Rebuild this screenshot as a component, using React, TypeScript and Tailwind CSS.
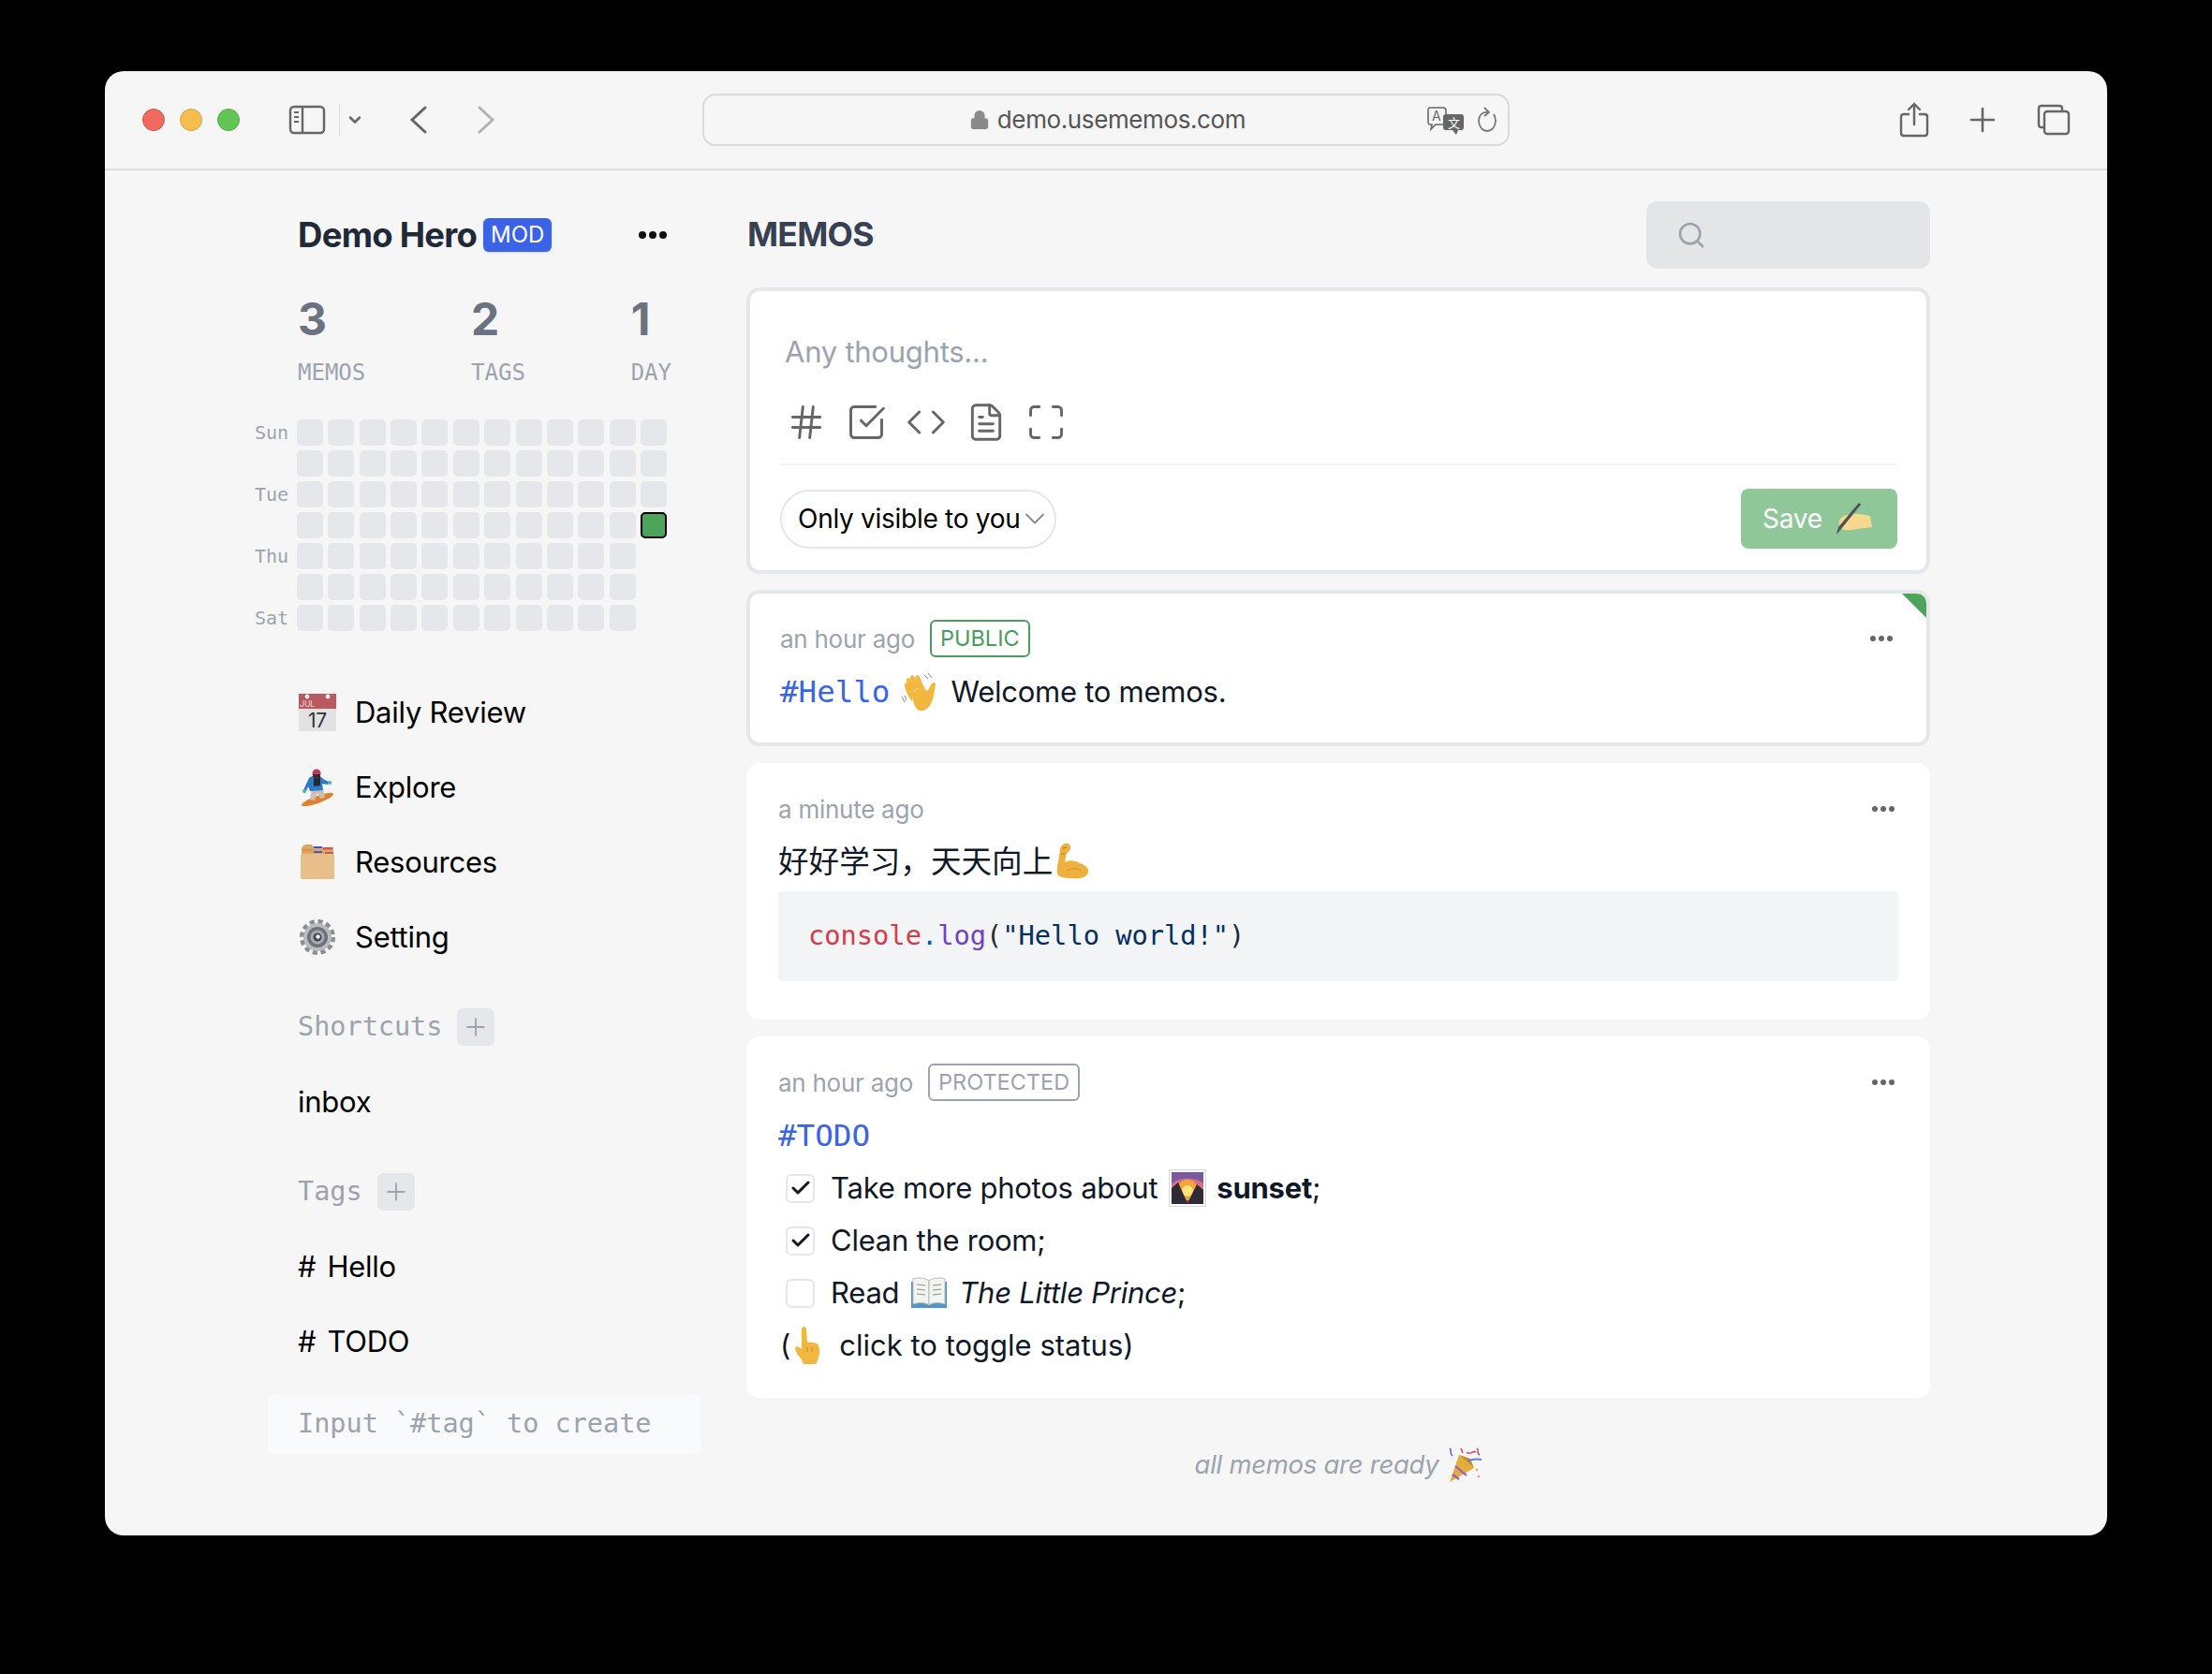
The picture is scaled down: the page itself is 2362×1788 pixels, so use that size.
import React from 'react';
import { Check, ChevronDown, Code, FileText, Hash, Lock, Maximize, Plus, Search, SquareCheckBig } from 'lucide-react';

const SANS = "[font-family:Inter,'Noto_Sans_CJK_SC',sans-serif]";

const CalendarEmoji = () => (
  <svg width="40" height="40" viewBox="0 0 40 40" className="shrink-0">
    <rect x="0" y="16" width="40" height="24" fill="#e2e2e2" />
    <rect x="0" y="0" width="40" height="16" fill="#b9585f" />
    <circle cx="9" cy="3" r="2.4" fill="#f4eeee" />
    <circle cx="31" cy="3" r="2.4" fill="#f4eeee" />
    <text x="1" y="14" fontSize="9" fill="#ecd3d3" fontFamily="Inter">JUL</text>
    <text x="20" y="36" fontSize="21" fill="#333" textAnchor="middle" fontFamily="Inter">17</text>
  </svg>
);

const SnowboarderEmoji = () => (
  <svg width="40" height="40" viewBox="0 0 40 40" className="shrink-0">
    <ellipse cx="20" cy="33" rx="18" ry="4" transform="rotate(-20 20 33)" fill="#e2802f" />
    <path d="M14 22 L26 21 L28 31 L23 32 L20 26 L17 34 L12 33 Z" fill="#c9bfb6" />
    <path d="M11 10 C14 7 24 7 26 11 L32 14 L31 17 L25 16 L26 23 L12 24 L10 19 L8 24 L5 23 Z" fill="#2f79c9" />
    <path d="M16 9 L23 9 L23 18 L16 19 Z" fill="#232a33" />
    <circle cx="19" cy="5" r="4.5" fill="#b8395f" />
    <rect x="15" y="6" width="8" height="3" fill="#3c2a2a" />
    <circle cx="6" cy="24" r="2" fill="#39b7a5" />
    <circle cx="33" cy="15" r="2" fill="#39b7a5" />
  </svg>
);

const FolderEmoji = () => (
  <svg width="40" height="40" viewBox="0 0 40 40" className="shrink-0">
    <path d="M3 7 C3 3 5 1 9 1 L13 1 C15 1 15 4 17 4 L37 4 L37 14 L3 14 Z" fill="#d8a76a" />
    <rect x="16" y="3" width="9" height="2" fill="#4a55c9" />
    <rect x="26" y="4" width="10" height="2.4" fill="#d9534a" />
    <rect x="16" y="8" width="9" height="2" fill="#4a55c9" />
    <rect x="28" y="9" width="9" height="2.4" fill="#d9534a" />
    <rect x="3" y="6" width="12" height="2" fill="#e8913b" />
    <rect x="2" y="11" width="36" height="27" rx="1.5" fill="#e6bf8b" />
  </svg>
);

const GearEmoji = () => (
  <svg width="40" height="40" viewBox="0 0 40 40" className="shrink-0">
    <circle cx="20" cy="20" r="16.5" fill="none" stroke="#8b8d92" strokeWidth="5" strokeDasharray="5 3.64" />
    <circle cx="20" cy="20" r="15" fill="#b9bbc0" />
    <circle cx="20" cy="20" r="11" fill="#6f7279" />
    <circle cx="20" cy="20" r="7.5" fill="#a9abb1" />
    <circle cx="20" cy="20" r="4.5" fill="#43464c" />
    <circle cx="20.5" cy="19.5" r="2.2" fill="#f1f1f1" />
  </svg>
);

const WaveEmoji = () => (
  <svg width="40" height="40" viewBox="0 0 40 40" className="shrink-0">
    <g fill="#f2b73f">
      <path d="M12 30 C8 26 5 18 4 14 C3 10 7 9 8.5 12 L13 21 Z" />
      <path d="M12 21 L6 9 C5 5 9 4 10.5 7 L16 17 Z" />
      <path d="M15 18 L10 6 C9 2 13 1 14.5 4 L20 15 Z" />
      <path d="M19 16 L15.5 5 C15 2 19 1 20 4 L25 16 Z" />
      <path d="M11 21 L24 13 C26 18 27 20 29 18 C31 15 33 9 36 10 C38 11 36 17 35 24 C33 33 29 40 22 40 C16 40 14 35 11 21 Z" />
    </g>
    <path d="M25 2 L29 6 M29 0 L33 5" stroke="#777" strokeWidth="0.9" fill="none" />
    <path d="M1 25 L4 31 M4 24 L6 29" stroke="#777" strokeWidth="0.9" fill="none" />
  </svg>
);

const MuscleEmoji = () => (
  <svg width="40" height="40" viewBox="0 0 40 40" className="shrink-0">
    <path d="M8 8 C8 2 15 -1 18 2 C21 5 18 10 15 11 L13 21 C18 18 25 19 29 22 C35 24 39 27 38 32 C36 38 28 39 20 38 C13 38 6 37 5 33 C4 27 7 15 8 8 Z" fill="#eeb03e" />
    <path d="M11 6 L15 5 M9 12 L14 12" stroke="#b97c1e" strokeWidth="1.1" />
    <path d="M15 30 C20 27 25 27 30 30" stroke="#cf9226" strokeWidth="1" fill="none" />
  </svg>
);

const HandWriteEmoji = () => (
  <svg width="38" height="36" viewBox="0 0 38 36" className="shrink-0">
    <path d="M3 20 C6 14 12 14 16 13 C22 12 30 14 36 15 L38 27 L21 29 C13 31 6 31 3 27 Z" fill="#f5d98f" />
    <path d="M24 1 L26 3 L5 29 L0 35 L2 27 Z" fill="#4f5357" />
  </svg>
);

const SunsetEmoji = () => (
  <svg width="40" height="40" viewBox="0 0 40 40" className="shrink-0">
    <rect x="0.5" y="0.5" width="39" height="39" fill="#fff" stroke="#d6d6d6" />
    <rect x="3" y="3" width="34" height="34" fill="#7a5a9c" />
    <path d="M3 24 L37 24 L37 15 C27 8 13 8 3 15 Z" fill="#d1728a" />
    <circle cx="20" cy="22" r="11" fill="#f5a33b" />
    <circle cx="20" cy="23" r="6" fill="#ffe27a" />
    <path d="M3 37 L3 20 L10 14 L20 36 L30 16 L37 22 L37 37 Z" fill="#2f2a35" />
  </svg>
);

const BookEmoji = () => (
  <svg width="40" height="36" viewBox="0 0 40 36" className="shrink-0">
    <path d="M1 6 L1 34 L39 34 L39 6 Z" fill="#4f94c4" />
    <path d="M3 3 C9 1 16 2 20 5 L20 31 C16 28 9 28 3 30 Z" fill="#f3f3f0" stroke="#b9b9b9" />
    <path d="M37 3 C31 1 24 2 20 5 L20 31 C24 28 31 28 37 30 Z" fill="#f3f3f0" stroke="#b9b9b9" />
    <path d="M7 9 L16 10 M7 14 L16 15 M7 19 L16 20 M24 10 L33 9 M24 15 L33 14 M24 20 L33 19" stroke="#8f8f8f" strokeWidth="1.2" />
  </svg>
);

const PointEmoji = () => (
  <svg width="30" height="40" viewBox="0 0 30 40" className="shrink-0">
    <path d="M9 3 C9 -1 14 -1 14 3 L15 17 C20 16 26 17 27 20 C29 26 28 32 26 36 L24 40 L11 40 L9 35 C5 31 2 26 2 23 C3 20 6 21 9 24 Z" fill="#f2b73f" />
    <path d="M15 22 L15 27 M20 22 L20 27" stroke="#c98f22" strokeWidth="1" />
  </svg>
);

const PopperEmoji = () => (
  <svg width="36" height="38" viewBox="0 0 36 38" className="shrink-0">
    <path d="M2 37 L12 8 L28 22 Z" fill="#e3ad3a" />
    <path d="M8 20 L20 30 M5 29 L12 34" stroke="#9a5ac9" strokeWidth="2.2" />
    <path d="M12 8 L28 22 L24 12 Z" fill="#c68a22" />
    <path d="M14 1 L16 6 M20 5 C24 9 26 3 30 5 M31 1 C34 3 30 6 34 8" stroke="#d3506b" strokeWidth="1.6" fill="none" />
    <path d="M22 14 C27 12 31 12 36 13" stroke="#5b83e6" strokeWidth="2" fill="none" />
    <path d="M2 1 C5 3 1 6 5 9" stroke="#4a6fd6" strokeWidth="1.6" fill="none" />
    <circle cx="31" cy="24" r="1.3" fill="#e3ad3a" />
    <circle cx="33" cy="31" r="1.3" fill="#e39a7a" />
  </svg>
);

const Dots = ({ className, size }: { className: string; size: string }) => (
  <div className={`flex items-center justify-between ${className}`}>
    {[0, 1, 2].map((i) => (
      <span key={i} className={`${size} rounded-full bg-current`} />
    ))}
  </div>
);

const Toolbar = () => (
  <div className="flex h-[106px] shrink-0 items-center border-b-2 border-[#dcdcdc] pl-[40px] text-[#666]">
    <div className="flex gap-[16px]">
      <span className="h-[24px] w-[24px] rounded-full border border-[#d9544c] bg-[#ee6a5f]" />
      <span className="h-[24px] w-[24px] rounded-full border border-[#dba33c] bg-[#f5bd4f]" />
      <span className="h-[24px] w-[24px] rounded-full border border-[#4fae47] bg-[#61c454]" />
    </div>
    <svg width="40" height="32" viewBox="0 0 40 32" fill="none" stroke="#666" strokeWidth="2.4" className="ml-[52px]">
      <rect x="2" y="2" width="36" height="28" rx="4" />
      <path d="M15 2 V30" />
      <path d="M6 8 H11 M6 13 H11 M6 18 H11" strokeWidth="2" />
    </svg>
    <span className="ml-[14px] h-[36px] w-[1px] bg-[#dedede]" />
    <ChevronDown size={20} strokeWidth={3} className="ml-[6px]" />
    <svg width="20" height="30" viewBox="0 0 20 30" fill="none" stroke="#666" strokeWidth="3" strokeLinecap="round" className="ml-[48px]">
      <path d="M17 2 L3 15 L17 28" />
    </svg>
    <svg width="20" height="30" viewBox="0 0 20 30" fill="none" stroke="#b3b3b3" strokeWidth="3" strokeLinecap="round" className="ml-[52px]">
      <path d="M3 2 L17 15 L3 28" />
    </svg>
    <div className="relative ml-[221px] flex h-[56px] w-[862px] items-center justify-center rounded-[14px] border-2 border-[#dadada]">
      <div className="ml-[3px] flex items-center gap-[8px] text-[26px] leading-[36px] tracking-[-0.015em] text-[#555]">
        <Lock size={22} fill="#8a8a8a" stroke="#8a8a8a" />
        <span>demo.usememos.com</span>
      </div>
      <svg width="40" height="30" viewBox="0 0 40 30" className="absolute right-[46px] top-[12px]">
        <path d="M3 1 H17 C19 1 20 2 20 4 V16 C20 18 19 19 17 19 H9 L4 24 L5 19 H3 C1 19 1 18 1 16 V4 C1 2 1 1 3 1 Z" fill="#f5f5f5" stroke="#666" strokeWidth="1.6" />
        <text x="5" y="15" fontSize="14" fill="#666" fontFamily="Inter">A</text>
        <path d="M20 8 H36 C38 8 39 9 39 11 V22 C39 24 38 25 36 25 H33 L31 30 L27 25 H20 C18 25 17 24 17 22 V11 C17 9 18 8 20 8 Z" fill="#666" />
        <text x="22" y="22" fontSize="13" fill="#fff" fontFamily="'Noto Sans CJK SC'">文</text>
      </svg>
      <svg width="22" height="28" viewBox="0 0 22 28" fill="none" stroke="#777" strokeWidth="1.8" className="absolute right-[11px] top-[12px]">
        <path d="M12 6 C5 5 2 10 2 15 C2 21 6 26 11 26 C16 26 20 21 20 15 C20 12 19 10 18 8" />
        <path d="M8 1 L13 6 L8 10" />
      </svg>
    </div>
    <svg width="32" height="38" viewBox="0 0 32 38" fill="none" stroke="#666" strokeWidth="2.4" strokeLinecap="round" className="ml-[416px]">
      <path d="M10 13 H5 C3 13 2 14 2 16 V33 C2 35 3 36 5 36 H27 C29 36 30 35 30 33 V16 C30 14 29 13 27 13 H22" />
      <path d="M16 24 V2 M10 8 L16 2 L22 8" />
    </svg>
    <svg width="28" height="28" viewBox="0 0 28 28" stroke="#666" strokeWidth="2.6" strokeLinecap="round" className="ml-[43px]">
      <path d="M14 2 V26 M2 14 H26" />
    </svg>
    <svg width="36" height="34" viewBox="0 0 36 34" fill="none" stroke="#666" strokeWidth="2.4" className="ml-[44px]">
      <path d="M7 25 H5 C3 25 2 24 2 22 V5 C2 3 3 2 5 2 H24 C26 2 27 3 27 5 V8" />
      <rect x="8" y="8" width="26" height="24" rx="3" />
    </svg>
  </div>
);

const NAV = [
  { label: 'Daily Review', icon: <CalendarEmoji /> },
  { label: 'Explore', icon: <SnowboarderEmoji /> },
  { label: 'Resources', icon: <FolderEmoji /> },
  { label: 'Setting', icon: <GearEmoji /> },
];

const STATS = [
  { value: '3', label: 'MEMOS' },
  { value: '2', label: 'TAGS' },
  { value: '1', label: 'DAY' },
];

const Heatmap = () => (
  <div className="mt-[34px] flex gap-[9px]">
    <div className="flex w-[36px] flex-col gap-[5px] text-[20px] leading-[28px] text-[#9ca3af]">
      {['Sun', '', 'Tue', '', 'Thu', '', 'Sat'].map((d, i) => (
        <span key={i} className="h-[28px]">{d}</span>
      ))}
    </div>
    <div className="grid grid-flow-col grid-cols-[repeat(12,28px)] grid-rows-[repeat(7,28px)] gap-x-[5.36px] gap-y-[5px]">
      {Array.from({ length: 77 }).map((_, i) => (
        <span key={i} className="rounded-[5px] bg-[#e6e7ea]" />
      ))}
      <span className="col-start-12 row-start-1 rounded-[5px] bg-[#e6e7ea]" />
      <span className="col-start-12 row-start-2 rounded-[5px] bg-[#e6e7ea]" />
      <span className="col-start-12 row-start-3 rounded-[5px] bg-[#e6e7ea]" />
      <span className="col-start-12 row-start-4 rounded-[5px] border-2 border-black bg-[#4ca55a]" />
    </div>
  </div>
);

const SectionTitle = ({ label, className }: { label: string; className: string }) => (
  <div className={`flex h-[40px] items-center gap-[16px] ${className}`}>
    <span className="text-[28.5px] leading-[40px] text-[#9ca3af]">{label}</span>
    <span className="flex h-[40px] w-[40px] items-center justify-center rounded-[6px] bg-[#e5e7eb] text-[#9ca3af]">
      <Plus size={30} strokeWidth={1.5} />
    </span>
  </div>
);

const NavRow = ({ children }: { children: React.ReactNode }) => (
  <div className={`flex h-[80px] items-center text-[31px] leading-[40px] tracking-[-0.008em] text-black ${SANS}`}>{children}</div>
);

const Sidebar = () => (
  <aside className="flex w-[685px] shrink-0 flex-col pl-[160px] pt-[49px] [font-family:'DejaVu_Sans_Mono',monospace]">
    <div className={`ml-[46px] flex h-[40px] w-[394px] items-center ${SANS}`}>
      <span className="text-[36.5px] font-bold leading-[40px] tracking-[-0.02em] text-[#1f2937]">Demo Hero</span>
      <span className="ml-[7px] flex h-[36px] w-[73px] items-center justify-center rounded-[6px] bg-[#3b63e8] text-[24px] text-white shadow-sm">MOD</span>
      <Dots className="ml-auto w-[30px] text-[#111]" size="h-[8px] w-[8px]" />
    </div>
    <div className="ml-[46px] mt-[42px] flex w-[399px] justify-between">
      {STATS.map((s) => (
        <div key={s.label} className="flex flex-col">
          <span className={`text-[48px] font-bold leading-[56px] text-[#6b7280] ${SANS}`}>{s.value}</span>
          <span className="mt-[13px] text-[24px] leading-[32px] text-[#9ca3af]">{s.label}</span>
        </div>
      ))}
    </div>
    <Heatmap />
    <div className="ml-[46px] mt-[47px] flex flex-col">
      {NAV.map((n) => (
        <NavRow key={n.label}>
          <span className="ml-[1px] mr-[20px] flex">{n.icon}</span>
          {n.label}
        </NavRow>
      ))}
      <SectionTitle label="Shortcuts" className="mt-[36px]" />
      <div className="mt-[20px]">
        <NavRow>inbox</NavRow>
      </div>
      <SectionTitle label="Tags" className="mt-[36px]" />
      <div className="mt-[20px]">
        <NavRow><span className="mr-[12px]">#</span> Hello</NavRow>
        <NavRow><span className="mr-[12px]">#</span> TODO</NavRow>
      </div>
    </div>
    <div className="ml-[14px] mt-[17px] flex h-[63px] w-[462px] items-center rounded-[6px] bg-[#f9fafb] pl-[32px] text-[28.5px] text-[#9ca3af]">
      {'Input `#tag` to create'}
    </div>
  </aside>
);

const Editor = () => (
  <div className="mt-[20px] flex flex-col rounded-[14px] border-4 border-[#e5e7eb] bg-white px-[31px] pb-[23px] pt-[45px]">
    <div className="ml-[6px] text-[31px] leading-[40px] tracking-[-0.008em] text-[#9ca3af]">Any thoughts...</div>
    <div className="ml-[7px] mt-[33px] flex gap-[20px] text-[#666]">
      <Hash size={44} strokeWidth={1.6} />
      <SquareCheckBig size={44} strokeWidth={1.6} />
      <Code size={44} strokeWidth={1.6} />
      <FileText size={44} strokeWidth={1.6} />
      <Maximize size={44} strokeWidth={1.6} />
    </div>
    <div className="mt-[22px] h-[2px] bg-[#f3f4f6]" />
    <div className="mt-[25px] flex items-center justify-between">
      <div className="ml-[1px] flex h-[63px] w-[295px] items-center rounded-full border-2 border-[#e5e7eb] pl-[17px] text-[28px] tracking-[-0.01em] text-black">
        <span className="whitespace-nowrap">Only visible to you</span>
        <ChevronDown size={36} strokeWidth={1.2} className="ml-[-2px] shrink-0 text-[#888]" />
      </div>
      <div className="flex h-[64px] w-[167px] items-center gap-[15px] rounded-[8px] bg-[#8fc798] pl-[23px] text-[28px] tracking-[-0.01em] text-white">
        Save
        <HandWriteEmoji />
      </div>
    </div>
  </div>
);

const MemoMeta = ({ time, badge, badgeClass, dotsClass }: { time: string; badge?: string; badgeClass?: string; dotsClass?: string }) => (
  <div className="flex h-[40px] items-center">
    <span className="text-[26px] tracking-[-0.01em] text-[#9ca3af]">{time}</span>
    {badge && (
      <span className={`ml-[16px] flex h-[40px] items-center rounded-[6px] border-2 px-[9px] text-[23.5px] ${badgeClass}`}>{badge}</span>
    )}
    <Dots className={`ml-auto w-[24px] text-[#666] ${dotsClass ?? ''}`} size="h-[6px] w-[6px]" />
  </div>
);

const TodoRow = ({ checked, children }: { checked: boolean; children: React.ReactNode }) => (
  <div className="flex h-[56px] items-center">
    <span className="ml-[8px] mr-[17px] flex h-[31px] w-[31px] items-center justify-center rounded-[6px] border-2 border-[#e5e7eb] text-[#111827]">
      {checked && <Check size={24} strokeWidth={3} />}
    </span>
    {children}
  </div>
);

const MONO = "[font-family:'DejaVu_Sans_Mono',monospace]";

const MemoList = () => (
  <>
    <div className="relative mt-[17px] overflow-hidden rounded-[14px] border-4 border-[#e5e7eb] bg-white pb-[30px] pl-[32px] pr-[36px] pt-[28px]">
      <span className="absolute right-0 top-0 h-0 w-0 border-l-[26px] border-t-[26px] border-l-transparent border-t-[#4ca55a]" />
      <MemoMeta time="an hour ago" badge="PUBLIC" badgeClass="border-[#4a9c5d] text-[#4a9c5d]" />
      <div className="mt-[13px] flex h-[48px] items-center text-[31px] tracking-[-0.008em] text-[#111827]">
        <span className={`text-[32.5px] tracking-normal text-[#3b63e8] ${MONO}`}>#Hello</span>
        <span className="ml-[12px] mr-[13px] flex"><WaveEmoji /></span>
        Welcome to memos.
      </div>
    </div>

    <div className="mt-[18px] rounded-[14px] bg-white pb-[41px] pl-[34px] pr-[34px] pt-[29px]">
      <MemoMeta time="a minute ago" dotsClass="mr-[4px]" />
      <div className="mt-[12px] flex h-[48px] items-center text-[32.6px] text-[#111827]">
        {'好好学习\uFF0C天天向上'}
        <MuscleEmoji />
      </div>
      <div className={`mt-[8px] flex h-[96px] items-center rounded-[4px] bg-[#f3f4f6] pl-[32px] text-[28.7px] text-[#032f62] ${MONO}`}>
        <span className="text-[#d73a49]">console</span>
        <span className="text-[#005cc5]">.</span>
        <span className="text-[#6f42c1]">log</span>
        <span className="text-[#24292e]">(</span>
        {'"Hello world!"'}
        <span className="text-[#24292e]">)</span>
      </div>
    </div>

    <div className="mt-[18px] rounded-[14px] bg-white pb-[28px] pl-[34px] pr-[34px] pt-[29px]">
      <MemoMeta time="an hour ago" badge="PROTECTED" badgeClass="border-[#9ca3af] text-[#9ca3af]" dotsClass="mr-[4px]" />
      <div className={`mt-[13px] flex h-[48px] items-center text-[32.6px] text-[#3b63e8] ${MONO}`}>#TODO</div>
      <div className="mt-[4px] flex flex-col text-[31px] tracking-[-0.008em] text-[#111827]">
        <TodoRow checked>
          Take more photos about
          <span className="ml-[12px] mr-[11px] flex"><SunsetEmoji /></span>
          <b className="font-bold">sunset</b>;
        </TodoRow>
        <TodoRow checked>Clean the room;</TodoRow>
        <TodoRow checked={false}>
          Read
          <span className="ml-[12px] mr-[12px] flex"><BookEmoji /></span>
          <i>The Little Prince</i>;
        </TodoRow>
        <div className="flex h-[56px] items-center pl-[2px] tracking-normal">
          (
          <span className="ml-[3px] mr-[19px] flex"><PointEmoji /></span>
          click to toggle status)
        </div>
      </div>
    </div>
  </>
);

export default function App() {
  return (
    <div className={`h-[1788px] w-full overflow-hidden bg-black pl-[112px] pt-[76px] ${SANS}`}>
      <div className="flex h-[1564px] w-[2138px] flex-col overflow-hidden rounded-[20px] bg-[#f6f6f6]">
        <Toolbar />
        <div className="flex">
          <Sidebar />
          <main className="flex w-[1264px] shrink-0 flex-col pt-[33px]">
            <div className="flex h-[72px] items-center justify-between">
              <h1 className="ml-[1px] text-[35.5px] font-bold tracking-[-0.02em] text-[#374151]">MEMOS</h1>
              <div className="flex h-[72px] w-[303px] items-center rounded-[12px] bg-[#e4e5e7] pl-[32px] text-[#9ca3af]">
                <Search size={32} strokeWidth={2} />
              </div>
            </div>
            <Editor />
            <MemoList />
            <div className="mt-[48px] flex h-[48px] items-center justify-center gap-[10px] text-[27.5px] italic tracking-[-0.01em] text-[#9ca3af]">
              all memos are ready
              <PopperEmoji />
            </div>
          </main>
        </div>
      </div>
    </div>
  );
}
